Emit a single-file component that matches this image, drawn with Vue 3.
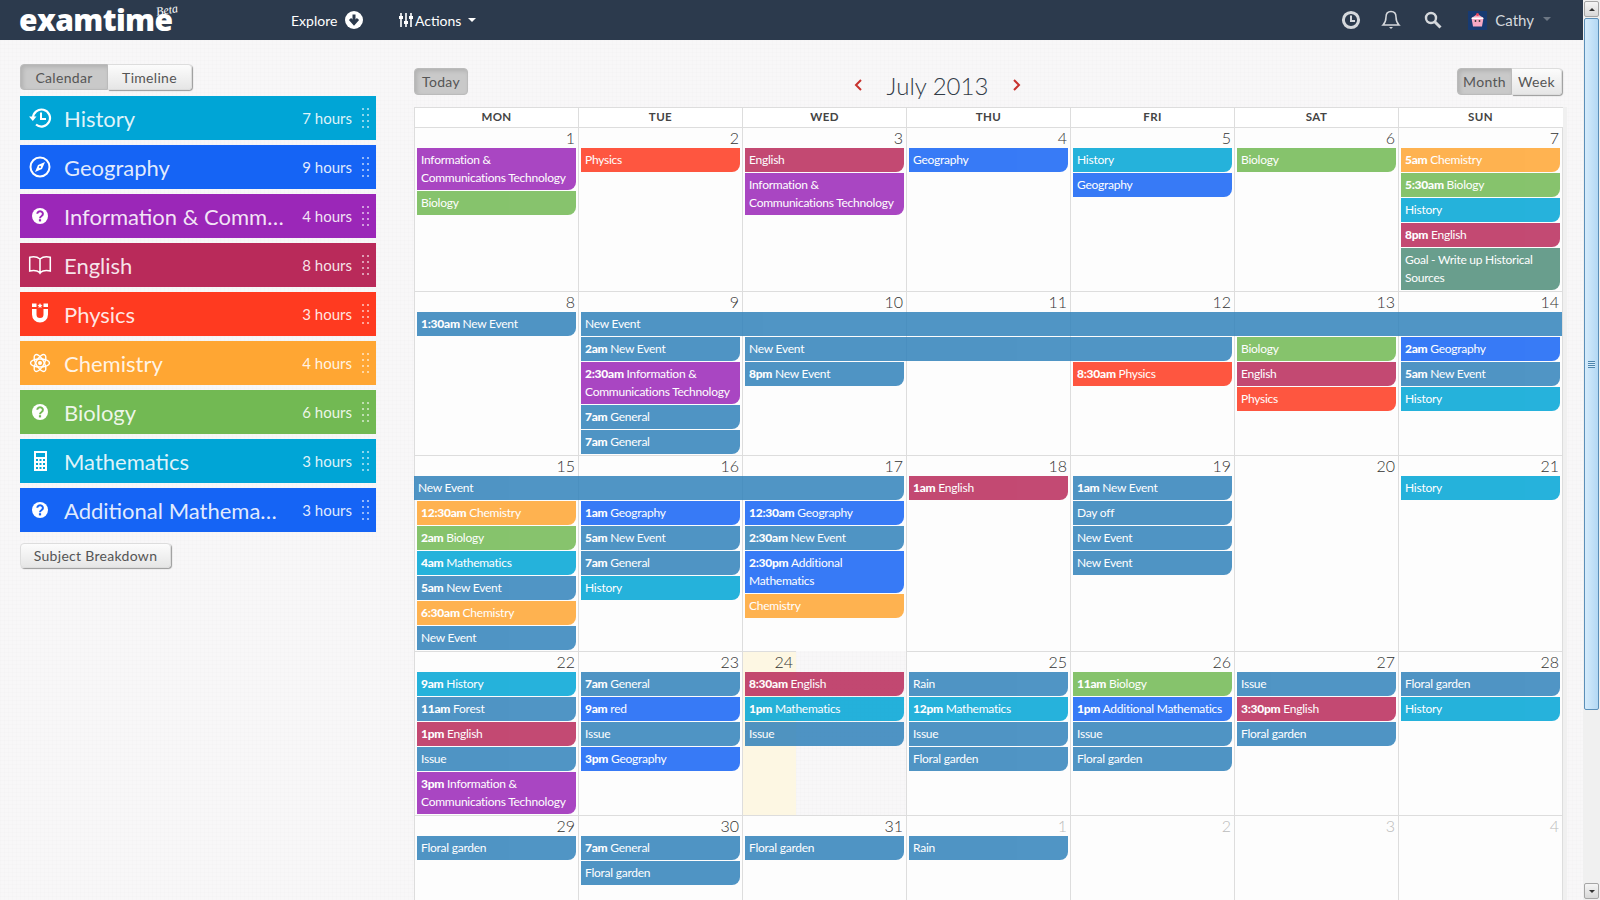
<template>
	<div class="page">
		<div class="main">
			<header class="topbar">
				<div class="logo">examtime<span class="logo__beta">Beta</span></div>
				<nav class="topnav">
					<a class="topnav__item explore">
						Explore
						<svg width="18" height="18" viewBox="0 0 18 18">
							<circle cx="9" cy="9" r="9" fill="#fff" />
							<path d="M9 3.5v8M5 8l4 4.5L13 8" fill="none" stroke="#2c3a4d" stroke-width="3" />
						</svg>
					</a>
					<a class="topnav__item actions">
						<svg width="14" height="14" viewBox="0 0 14 14">
							<path d="M2 0v14M7 0v14M12 0v14" stroke="#fff" stroke-width="1.6" />
							<path d="M0 3h4v3H0zM5 8h4v3H5zM10 3h4v3h-4z" fill="#fff" />
						</svg>
						Actions
						<i class="caret"></i>
					</a>
				</nav>
				<div class="topright">
					<svg class="topright__clock" width="20" height="20" viewBox="0 0 20 20">
						<circle cx="10" cy="10" r="7.6" fill="none" stroke="#d5d8dc" stroke-width="3" />
						<path d="M10 5.5V11h4" fill="none" stroke="#d5d8dc" stroke-width="2" />
					</svg>
					<svg class="topright__bell" width="20" height="20" viewBox="0 0 20 20">
						<path d="M10 1.5c-3.5 0-5 2.7-5 5.5 0 4-1 6-3 8h16c-2-2-3-4-3-8 0-2.800-1.500-5.500-5-5.500z" fill="none" stroke="#d5d8dc" stroke-width="1.500" />
						<path d="M8 17h4l-2 2z" fill="#d5d8dc" />
					</svg>
					<svg class="topright__search" width="18" height="18" viewBox="0 0 18 18">
						<circle cx="7" cy="7" r="5" fill="none" stroke="#d5d8dc" stroke-width="2.400" />
						<path d="M10.500 10.500l6 6" stroke="#d5d8dc" stroke-width="3" />
					</svg>
					<svg class="topright__avatar" width="19" height="19" viewBox="0 0 19 19">
						<rect width="19" height="19" fill="#173a72" />
						<path d="M9.500 3l6 4-1.500 8.500H5L3.500 7z" fill="#f7a8c4" />
						<circle cx="9.500" cy="3.500" r="1.500" fill="#e8445a" />
						<path d="M4 6.500h11l.4 1.500H3.600z" fill="#fff" />
						<circle cx="7.500" cy="10" r=".9" fill="#333" />
						<circle cx="11.500" cy="10" r=".9" fill="#333" />
					</svg>
					<span class="topright__name">Cathy</span>
					<i class="caret caret--muted"></i>
				</div>
			</header>

			<div class="content">
				<aside class="sidebar">
					<div class="btn-group sidebar__tabs">
						<button class="btn active tab-calendar">Calendar</button>
						<button class="btn tab-timeline">Timeline</button>
					</div>

					<div class="subjects">
						<div v-for="s in subjects" :key="s.name" class="subject" :style="{ background: s.color, '--c': s.color }">
							<span class="subject__icon">
								<svg v-if="s.icon === 'history'" width="24" height="24" viewBox="0 0 24 24">
									<path d="M5 12a8.500 8.500 0 1 1 3 6.500" fill="none" stroke="currentColor" stroke-width="2.200" />
									<path d="M1 10.500h7.500L4.800 15z" fill="currentColor" />
									<path d="M13 6.500V13h5" fill="none" stroke="currentColor" stroke-width="2" />
								</svg>
								<svg v-else-if="s.icon === 'compass'" width="24" height="24" viewBox="0 0 24 24">
									<circle cx="12" cy="12" r="9.500" fill="none" stroke="currentColor" stroke-width="2" />
									<path d="M17 7l-3 7-7 3 3-7zM12 11a1 1 0 1 0 0 2 1 1 0 0 0 0-2z" fill="currentColor" fill-rule="evenodd" />
								</svg>
								<svg v-else-if="s.icon === 'question'" width="24" height="24" viewBox="0 0 24 24">
									<circle cx="12" cy="12" r="8" fill="currentColor" />
									<path d="M9.300 9.800a2.800 2.600 0 1 1 4.300 2.200c-1 .6-1.600 1-1.600 2.200" fill="none" stroke="var(--c)" stroke-width="2" />
									<rect x="10.900" y="15.200" width="2.200" height="2.200" fill="var(--c)" />
								</svg>
								<svg v-else-if="s.icon === 'book'" width="28" height="24" viewBox="0 0 28 24">
									<path d="M14 5C11 2.500 6 2 2 3v16c4-1 9-.5 12 2 3-2.500 8-3 12-2V3c-4-1-9-.5-12 2zM14 5v16" fill="none" stroke="currentColor" stroke-width="1.800" />
									<path d="M12.500 21.500h3L14 23z" fill="currentColor" />
								</svg>
								<svg v-else-if="s.icon === 'magnet'" width="24" height="24" viewBox="0 0 24 24">
									<path d="M4 7h4.500v5.500a3.500 3.500 0 0 0 7 0V7H20v5.500a8 8 0 0 1-16 0z" fill="currentColor" />
									<path d="M4 1.500h4.500v3.500H4zM15.500 1.500H20v3.500h-4.500zM12 1l.8 1.800 1.700.3-1.300 1.200.3 1.700-1.500-.9-1.500.9.300-1.700-1.300-1.200 1.700-.3z" fill="currentColor" />
								</svg>
								<svg v-else-if="s.icon === 'atom'" width="24" height="24" viewBox="0 0 24 24">
									<g fill="none" stroke="currentColor" stroke-width="1.400">
										<ellipse cx="12" cy="12" rx="9.500" ry="4" />
										<ellipse cx="12" cy="12" rx="9.500" ry="4" transform="rotate(60 12 12)" />
										<ellipse cx="12" cy="12" rx="9.500" ry="4" transform="rotate(120 12 12)" />
									</g>
									<circle cx="12" cy="12" r="2" fill="currentColor" />
								</svg>
								<svg v-else-if="s.icon === 'calc'" width="24" height="24" viewBox="0 0 24 24">
									<path d="M6 2h13v20H6zM8 4v4h9V4zM8 10v2h2v-2zM11.500 10v2h2v-2zM15 10v2h2v-2zM8 14v2h2v-2zM11.500 14v2h2v-2zM15 14v2h2v-2zM8 18v2h2v-2zM11.500 18v2h2v-2zM15 18v2h2v-2z" fill="currentColor" fill-rule="evenodd" />
								</svg>
							</span>
							<span class="subject__name">{{ s.name }}</span>
							<span class="subject__hours">{{ s.hours }} hours</span>
							<span class="subject__dots"></span>
						</div>
					</div>

					<button class="btn breakdown">Subject Breakdown</button>
				</aside>

				<section class="calendar">
					<div class="calendar__bar">
						<button class="btn active today">Today</button>
						<div class="calendar__title">
							<span class="arrow">
								<svg width="10" height="12" viewBox="0 0 10 12"><path d="M8 1L3 6l5 5" fill="none" stroke="#c8322e" stroke-width="2" /></svg>
							</span>
							<h2>July 2013</h2>
							<span class="arrow">
								<svg width="10" height="12" viewBox="0 0 10 12"><path d="M2 1l5 5-5 5" fill="none" stroke="#c8322e" stroke-width="2" /></svg>
							</span>
						</div>
						<div class="btn-group">
							<button class="btn active view-month">Month</button>
							<button class="btn view-week">Week</button>
						</div>
					</div>

					<div class="grid">
						<div class="grid__head">
							<div v-for="d in dayNames" :key="d" class="grid__dayname">{{ d }}</div>
						</div>
						<div v-for="(week, w) in weeks" :key="w" class="week">
							<div v-for="day in week" :key="day.n" class="day" :class="{ today: day.today, muted: day.muted }">
								<div class="day__num">{{ day.n }}</div>
								<div class="day__events">
									<template v-for="(e, i) in day.events" :key="i">
										<div v-if="!e" class="event-gap"></div>
										<div
											v-else
											class="event"
											:class="{ 'event--open-right': e.openRight, 'event--open-left': e.openLeft }"
											:style="eventStyle(e)"
										>
											<b v-if="e.time">{{ e.time }}</b> {{ e.title }}
										</div>
									</template>
								</div>
							</div>
						</div>
					</div>
				</section>
			</div>
		</div>

		<div class="scrollbar">
			<div class="scrollbar__btn"><i class="tri-up"></i></div>
			<div class="scrollbar__thumb"><span></span></div>
			<div class="scrollbar__track"></div>
			<div class="scrollbar__btn"><i class="tri-down"></i></div>
		</div>
	</div>
</template>

<script setup>
	const colors = {
		history: "#00a5d6",
		geography: "#1564f5",
		ict: "#9b27b8",
		english: "#b92a5a",
		physics: "#ff3a20",
		chemistry: "#ffa633",
		biology: "#72b953",
		general: "#3182bb",
		goal: "#508e7a",
	};

	const subjects = [
		{ name: "History", hours: 7, color: colors.history, icon: "history" },
		{ name: "Geography", hours: 9, color: colors.geography, icon: "compass" },
		{ name: "Information & Communications Technology", hours: 4, color: colors.ict, icon: "question" },
		{ name: "English", hours: 8, color: colors.english, icon: "book" },
		{ name: "Physics", hours: 3, color: colors.physics, icon: "magnet" },
		{ name: "Chemistry", hours: 4, color: colors.chemistry, icon: "atom" },
		{ name: "Biology", hours: 6, color: colors.biology, icon: "question" },
		{ name: "Mathematics", hours: 3, color: colors.history, icon: "calc" },
		{ name: "Additional Mathematics", hours: 3, color: colors.geography, icon: "question" },
	];

	const dayNames = ["MON", "TUE", "WED", "THU", "FRI", "SAT", "SUN"];

	const ICT = "Information & Communications Technology";

	// shorthand: ev(color, title, time)
	const ev = (c, title, time = "", extra = {}) => ({ color: colors[c], title, time, ...extra });
	const ne = (time = "") => ev("general", "New Event", time);
	const gen = () => ev("general", "General", "7am");
	const fg = () => ev("general", "Floral garden");
	const issue = () => ev("general", "Issue");

	const weeks = [
		[
			{ n: 1, events: [ev("ict", ICT), ev("biology", "Biology")] },
			{ n: 2, events: [ev("physics", "Physics")] },
			{ n: 3, events: [ev("english", "English"), ev("ict", ICT)] },
			{ n: 4, events: [ev("geography", "Geography")] },
			{ n: 5, events: [ev("history", "History"), ev("geography", "Geography")] },
			{ n: 6, events: [ev("biology", "Biology")] },
			{
				n: 7,
				events: [
					ev("chemistry", "Chemistry", "5am"),
					ev("biology", "Biology", "5:30am"),
					ev("history", "History"),
					ev("english", "English", "8pm"),
					ev("goal", "Goal - Write up Historical Sources"),
				],
			},
		],
		[
			{ n: 8, events: [ne("1:30am")] },
			{
				n: 9,
				events: [
					ev("general", "New Event", "", { span: 6, openRight: true }),
					ne("2am"),
					ev("ict", ICT, "2:30am"),
					gen(),
					gen(),
				],
			},
			{ n: 10, events: [null, ev("general", "New Event", "", { span: 3 }), ne("8pm")] },
			{ n: 11, events: [] },
			{ n: 12, events: [null, null, ev("physics", "Physics", "8:30am")] },
			{ n: 13, events: [null, ev("biology", "Biology"), ev("english", "English"), ev("physics", "Physics")] },
			{ n: 14, events: [null, ev("geography", "Geography", "2am"), ne("5am"), ev("history", "History")] },
		],
		[
			{
				n: 15,
				events: [
					ev("general", "New Event", "", { span: 3, openLeft: true }),
					ev("chemistry", "Chemistry", "12:30am"),
					ev("biology", "Biology", "2am"),
					ev("history", "Mathematics", "4am"),
					ne("5am"),
					ev("chemistry", "Chemistry", "6:30am"),
					ne(),
				],
			},
			{
				n: 16,
				events: [null, ev("geography", "Geography", "1am"), ne("5am"), gen(), ev("history", "History")],
			},
			{
				n: 17,
				events: [
					null,
					ev("geography", "Geography", "12:30am"),
					ne("2:30am"),
					ev("geography", "Additional Mathematics", "2:30pm"),
					ev("chemistry", "Chemistry"),
				],
			},
			{ n: 18, events: [ev("english", "English", "1am")] },
			{ n: 19, events: [ne("1am"), ev("general", "Day off"), ne(), ne()] },
			{ n: 20, events: [] },
			{ n: 21, events: [ev("history", "History")] },
		],
		[
			{
				n: 22,
				events: [
					ev("history", "History", "9am"),
					ev("general", "Forest", "11am"),
					ev("english", "English", "1pm"),
					issue(),
					ev("ict", ICT, "3pm"),
				],
			},
			{ n: 23, events: [gen(), ev("geography", "red", "9am"), issue(), ev("geography", "Geography", "3pm")] },
			{
				n: 24,
				today: true,
				events: [ev("english", "English", "8:30am"), ev("history", "Mathematics", "1pm"), issue()],
			},
			{ n: 25, events: [ev("general", "Rain"), ev("history", "Mathematics", "12pm"), issue(), fg()] },
			{
				n: 26,
				events: [ev("biology", "Biology", "11am"), ev("geography", "Additional Mathematics", "1pm"), issue(), fg()],
			},
			{ n: 27, events: [issue(), ev("english", "English", "3:30pm"), fg()] },
			{ n: 28, events: [fg(), ev("history", "History")] },
		],
		[
			{ n: 29, events: [fg()] },
			{ n: 30, events: [gen(), fg()] },
			{ n: 31, events: [fg()] },
			{ n: 1, muted: true, events: [ev("general", "Rain")] },
			{ n: 2, muted: true, events: [] },
			{ n: 3, muted: true, events: [] },
			{ n: 4, muted: true, events: [] },
		],
	];

	const COL = 164;

	function eventStyle(e) {
		const style = { "--ev": e.color };
		if (e.span) {
			let w = COL * e.span - 5;
			if (e.openRight) w += 2;
			if (e.openLeft) w += 3;
			style.width = `${w}px`;
		}
		return style;
	}
</script>

<style>
	html,
	body {
		margin: 0;
		height: 100%;
		overflow: hidden;
	}
</style>

<style scoped>
	.page {
		display: flex;
		width: 1600px;
		height: 900px;
		overflow: hidden;
		font-family: Lato, "Open Sans", sans-serif;
		color: #444;
	}

	.main {
		width: 1583px;
		height: 900px;
		overflow: hidden;
		background-color: #f8f7f8;
		background-image: linear-gradient(rgba(0, 0, 0, 0.006) 1px, transparent 1px), linear-gradient(90deg, rgba(0, 0, 0, 0.006) 1px, transparent 1px);
		background-size: 4px 4px;
	}

	.topbar {
		display: flex;
		align-items: center;
		height: 40px;
		background: #2c3a4d;
		color: #fff;
	}

	.logo {
		position: relative;
		margin-left: 19px;
		width: 272px;
		font-family: "Open Sans", sans-serif;
		font-size: 30px;
		font-weight: 800;
		letter-spacing: -0.6px;
		line-height: 40px;
	}

	.logo__beta {
		position: absolute;
		left: 137px;
		top: -10px;
		font-family: "Liberation Serif", serif;
		font-style: italic;
		font-size: 12px;
		font-weight: 400;
		letter-spacing: 0;
		transform: rotate(-10deg);
	}

	.topnav {
		display: flex;
		align-items: center;
		font-size: 14px;
	}

	.topnav__item {
		display: flex;
		align-items: center;
	}

	.explore {
		gap: 8px;
		width: 108px;
	}

	.actions {
		gap: 2px;
	}

	.caret {
		display: inline-block;
		margin-left: 5px;
		border: 4px solid transparent;
		border-top-color: #fff;
		border-bottom: 0;
	}

	.caret--muted {
		border-top-color: #6d7784;
		margin: -3px 0 0 9px;
	}

	.topright {
		display: flex;
		align-items: center;
		margin-left: auto;
		padding-right: 32px;
	}

	.topright__clock {
		margin-right: 20px;
	}

	.topright__bell {
		margin-right: 23px;
	}

	.topright__search {
		margin-right: 26px;
	}

	.topright__avatar {
		margin-right: 8px;
	}

	.topright__name {
		font-size: 15px;
		color: #d5d8dc;
	}

	.content {
		display: flex;
	}

	.sidebar {
		box-sizing: border-box;
		width: 414px;
		padding: 24px 0 0 20px;
	}

	.btn-group {
		display: inline-flex;
	}

	.sidebar__tabs {
		display: flex;
		margin-bottom: 6px;
	}

	.btn {
		box-sizing: border-box;
		height: 26px;
		padding: 0;
		border: 1px solid #ddd;
		border-radius: 4px;
		background: linear-gradient(#fcfcfc, #e6e6e6);
		box-shadow: 1px 1px 1px #999;
		font-family: Lato, sans-serif;
		font-size: 14px;
		letter-spacing: 0.3px;
		color: #555;
	}

	.btn.active {
		background: #c9c9c9;
		border-color: #bbb;
		box-shadow: inset 2px 2px 4px rgba(0, 0, 0, 0.12);
	}

	.btn-group .btn {
		height: 26px;
	}

	.btn-group .btn:first-child {
		border-radius: 4px 0 0 4px;
	}

	.btn-group .btn:last-child {
		border-radius: 0 4px 4px 0;
		border-left: 0;
	}

	.tab-calendar {
		width: 88px;
	}

	.tab-timeline {
		width: 84px;
	}

	.subjects {
		display: flex;
		flex-direction: column;
		gap: 5px;
		width: 356px;
	}

	.subject {
		display: flex;
		align-items: center;
		height: 44px;
		padding: 0 6px 0 8px;
		color: rgba(255, 255, 255, 0.88);
	}

	.subject__icon {
		display: flex;
		justify-content: center;
		flex: none;
		width: 24px;
		margin-right: 12px;
		color: #fff;
	}

	.subject__name {
		flex: none;
		width: 224px;
		overflow: hidden;
		white-space: nowrap;
		text-overflow: ellipsis;
		font-size: 22px;
	}

	.subject__hours {
		flex: 1;
		font-size: 15px;
		text-align: right;
		white-space: nowrap;
	}

	.subject__dots {
		flex: none;
		width: 8px;
		height: 20px;
		margin-left: 10px;
		background-image: radial-gradient(circle at 1px 1px, rgba(255, 255, 255, 0.55) 1px, transparent 1.2px);
		background-size: 5px 6px;
	}

	.breakdown {
		display: block;
		width: 151px;
		margin-top: 11px;
		height: 25px;
	}

	.calendar {
		width: 1149px;
	}

	.calendar__bar {
		display: flex;
		align-items: flex-start;
		justify-content: space-between;
		height: 67px;
		padding-top: 28px;
		box-sizing: border-box;
		width: 1148px;
	}

	.calendar__bar .btn {
		height: 27px;
	}

	.today {
		width: 54px;
	}

	.view-month {
		width: 55px;
	}

	.view-week {
		width: 50px;
	}

	.calendar__title {
		display: flex;
		align-items: center;
		gap: 24px;
		margin: 0 0 0 -50px;
		height: 34px;
	}

	.calendar__title h2 {
		margin: 0;
		font-size: 24px;
		font-weight: 300;
		color: #333c48;
	}

	.arrow {
		display: flex;
	}

	.grid {
		width: 1149px;
		box-shadow: 4px 0 0 #f0f0f0;
	}

	.grid__head {
		display: grid;
		grid-template-columns: repeat(7, 164px) 1px;
		height: 19px;
		background: #fff;
		border-top: 1px solid #ddd;
	}

	.grid__dayname {
		border-left: 1px solid #ddd;
		font-size: 11.500px;
		font-weight: 700;
		letter-spacing: 0.4px;
		line-height: 18px;
		text-align: center;
		color: #444;
	}

	.week {
		display: grid;
		grid-template-columns: repeat(7, 164px);
		min-height: 164px;
		border-right: 1px solid #ddd;
	}

	.day {
		box-sizing: border-box;
		border-left: 1px solid #ddd;
		border-top: 1px solid #ddd;
		padding: 0 2px 1px;
		background: #fdfdfd;
	}

	.day.today {
		background: #fdf7e3;
	}

	.day__num {
		height: 20px;
		padding-right: 1px;
		font-size: 16px;
		font-weight: 300;
		line-height: 19px;
		text-align: right;
		color: #333;
	}

	.day.muted .day__num {
		color: #bbb;
	}

	.day__events {
		display: flex;
		flex-direction: column;
		gap: 1px;
		align-items: flex-start;
	}

	.event,
	.event-gap {
		flex: none;
		box-sizing: border-box;
		width: 159px;
	}

	.event-gap {
		height: 24px;
	}

	.event {
		position: relative;
		z-index: 1;
		min-height: 24px;
		padding: 3px 3px 3px 4px;
		background: var(--ev);
		opacity: 0.85;
		border-radius: 0 0 8px 0;
		font-size: 12px;
		line-height: 18px;
		letter-spacing: -0.25px;
		color: #fff;
	}

	.event b {
		font-weight: 900;
	}

	.event--open-right {
		border-radius: 0;
	}

	.event--open-left {
		margin-left: -3px;
	}

	.scrollbar {
		display: flex;
		flex-direction: column;
		width: 17px;
		height: 900px;
		background: #f0f0f0;
	}

	.scrollbar__btn {
		display: flex;
		flex: none;
		align-items: center;
		justify-content: center;
		box-sizing: border-box;
		height: 16px;
		margin: 1px;
		background: linear-gradient(#f5f5f5, #d8d8d8);
		border: 1px solid #a5a5a5;
		border-radius: 2px;
	}

	.tri-up,
	.tri-down {
		border: 3px solid transparent;
	}

	.tri-up {
		border-bottom-color: #333;
		border-top: 0;
	}

	.tri-down {
		border-top-color: #333;
		border-bottom: 0;
	}

	.scrollbar__thumb {
		display: flex;
		flex: none;
		align-items: center;
		justify-content: center;
		box-sizing: border-box;
		height: 692px;
		margin: 0 1px;
		background: linear-gradient(90deg, #d5ebfb, #b3d8f4);
		border: 1px solid #5b8fb8;
		border-radius: 2px;
	}

	.scrollbar__thumb span {
		width: 7px;
		height: 7px;
		background: repeating-linear-gradient(#4d85ad 0 1px, #d5ebfb 1px 2px);
	}

	.scrollbar__track {
		flex: 1;
	}
</style>
